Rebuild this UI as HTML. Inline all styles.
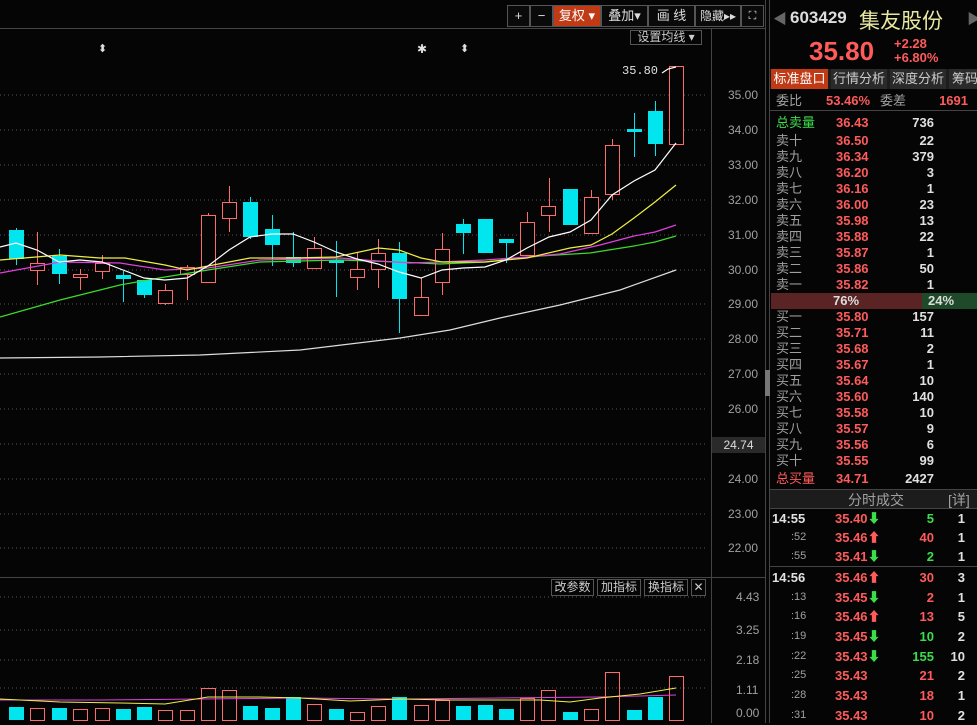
<!DOCTYPE html>
<html><head><meta charset="utf-8"><style>
*{margin:0;padding:0;box-sizing:border-box}
body{width:977px;height:723px;background:#050505;overflow:hidden;position:relative;font-family:"Liberation Sans","Noto Sans CJK SC",sans-serif}
.a{position:absolute;white-space:nowrap}
.btn{position:absolute;top:5px;height:22px;border:1px solid #555;color:#ddd;font-size:13px;line-height:20px;text-align:center;background:#0a0a0a}
.r{color:#ff5b5b}.g{color:#3ddc4b}.w{color:#e0e0e0}.gr{color:#a0a0a0}
.row{position:absolute;left:770px;width:207px;height:16px;font-size:13px;line-height:16px;font-weight:bold}
.row span{position:absolute}
.tr{position:absolute;left:770px;width:207px;height:19px;font-size:13px;line-height:19px;font-weight:bold}
.tr span{position:absolute}
</style></head><body>
<svg class="a" style="left:0;top:0" width="977" height="723">
<g stroke="#555" stroke-dasharray="1,3" stroke-width="1">
<line x1="0" y1="95" x2="705" y2="95"/><line x1="0" y1="130" x2="705" y2="130"/><line x1="0" y1="165" x2="705" y2="165"/><line x1="0" y1="200" x2="705" y2="200"/><line x1="0" y1="235" x2="705" y2="235"/><line x1="0" y1="270" x2="705" y2="270"/><line x1="0" y1="304" x2="705" y2="304"/><line x1="0" y1="339" x2="705" y2="339"/><line x1="0" y1="374" x2="705" y2="374"/><line x1="0" y1="409" x2="705" y2="409"/><line x1="0" y1="444" x2="705" y2="444"/><line x1="0" y1="479" x2="705" y2="479"/><line x1="0" y1="514" x2="705" y2="514"/><line x1="0" y1="548" x2="705" y2="548"/>
<line x1="0" y1="597" x2="705" y2="597"/><line x1="0" y1="630" x2="705" y2="630"/><line x1="0" y1="660" x2="705" y2="660"/><line x1="0" y1="688" x2="705" y2="688"/>
</g>
<g stroke="#444"><line x1="0" y1="28.5" x2="765" y2="28.5"/><line x1="711.5" y1="28" x2="711.5" y2="723"/><line x1="0" y1="577.5" x2="765" y2="577.5"/><line x1="765.5" y1="0" x2="765.5" y2="723"/><line x1="769.5" y1="0" x2="769.5" y2="723"/></g>
<rect x="765" y="370" width="5" height="26" fill="#777"/>
<g stroke-width="1">
<g stroke="#00e5ee">
<line x1="16.5" y1="228" x2="16.5" y2="265"/><line x1="59.5" y1="249" x2="59.5" y2="284"/><line x1="123.5" y1="271" x2="123.5" y2="302"/><line x1="144.5" y1="280" x2="144.5" y2="298"/><line x1="250.5" y1="197" x2="250.5" y2="239"/><line x1="272.5" y1="215" x2="272.5" y2="266"/><line x1="293.5" y1="232" x2="293.5" y2="267"/><line x1="336.5" y1="241" x2="336.5" y2="297"/><line x1="399.5" y1="242" x2="399.5" y2="333"/><line x1="463.5" y1="219" x2="463.5" y2="254"/><line x1="506.5" y1="240" x2="506.5" y2="263"/><line x1="634.5" y1="113" x2="634.5" y2="157"/><line x1="655.5" y1="101" x2="655.5" y2="156"/>
</g>
<g stroke="#ff6a6a">
<line x1="37.5" y1="232" x2="37.5" y2="285"/><line x1="80.5" y1="269" x2="80.5" y2="290"/><line x1="102.5" y1="255" x2="102.5" y2="279"/><line x1="165.5" y1="284" x2="165.5" y2="305"/><line x1="187.5" y1="265" x2="187.5" y2="300"/><line x1="208.5" y1="213" x2="208.5" y2="282"/><line x1="229.5" y1="186" x2="229.5" y2="232"/><line x1="314.5" y1="237" x2="314.5" y2="268"/><line x1="357.5" y1="252" x2="357.5" y2="290"/><line x1="378.5" y1="239" x2="378.5" y2="288"/><line x1="421.5" y1="278" x2="421.5" y2="315"/><line x1="442.5" y1="233" x2="442.5" y2="295"/><line x1="527.5" y1="212" x2="527.5" y2="255"/><line x1="549.5" y1="178" x2="549.5" y2="232"/><line x1="591.5" y1="190" x2="591.5" y2="233"/><line x1="612.5" y1="139" x2="612.5" y2="200"/>
</g></g>
<g fill="#00e5ee">
<rect x="9" y="230" width="15" height="29"/><rect x="52" y="256" width="15" height="18"/><rect x="116" y="275" width="15" height="4"/><rect x="137" y="280" width="15" height="15"/><rect x="243" y="202" width="15" height="35"/><rect x="265" y="229" width="15" height="16"/><rect x="286" y="257" width="15" height="6"/><rect x="329" y="260" width="15" height="3"/><rect x="392" y="253" width="15" height="46"/><rect x="456" y="224" width="15" height="9"/><rect x="478" y="219" width="15" height="34"/><rect x="499" y="239" width="15" height="4"/><rect x="563" y="189" width="15" height="36"/><rect x="627" y="129" width="15" height="3"/><rect x="648" y="111" width="15" height="33"/>
</g>
<g fill="#050505" stroke="#ff6a6a">
<rect x="30.5" y="263.5" width="14" height="7"/><rect x="73.5" y="274.5" width="14" height="3"/><rect x="95.5" y="263.5" width="14" height="8"/><rect x="158.5" y="290.5" width="14" height="13"/><rect x="180.5" y="267.5" width="14" height="7"/><rect x="201.5" y="215.5" width="14" height="67"/><rect x="222.5" y="202.5" width="14" height="16"/><rect x="307.5" y="248.5" width="14" height="20"/><rect x="350.5" y="269.5" width="14" height="8"/><rect x="371.5" y="253.5" width="14" height="16"/><rect x="414.5" y="297.5" width="14" height="18"/><rect x="435.5" y="249.5" width="14" height="33"/><rect x="520.5" y="222.5" width="14" height="33"/><rect x="541.5" y="206.5" width="14" height="9"/><rect x="584.5" y="197.5" width="14" height="36"/><rect x="605.5" y="145.5" width="14" height="49"/><rect x="669.5" y="66.5" width="14" height="78"/>
</g>
<g fill="none" stroke-width="1.2">
<polyline stroke="#ddd" points="0,358 100,357 200,355 300,350 400,338 450,330 500,318 560,305 620,290 676,270"/>
<polyline stroke="#3ddc2b" points="0,317 60,300 120,285 165,277 208,270 260,262 340,260 400,262 440,264 485,262 540,256 590,253 634,246 655,242 676,236"/>
<polyline stroke="#e040e0" points="0,273 60,262 120,263 165,270 208,268 260,260 340,258 378,261 410,263 440,262 485,260 527,257 560,254 600,245 634,236 655,232 676,225"/>
<polyline stroke="#f0f040" points="0,260 60,255 100,258 125,258 165,265 187,270 250,258 293,258 336,257 378,248 399,250 421,258 442,262 485,262 527,258 570,248 591,245 612,234 634,218 655,202 676,185"/>
<polyline stroke="#fff" points="0,247 16,243 37,250 59,262 80,260 102,262 123,270 144,278 165,280 187,278 208,266 229,250 250,237 272,234 293,234 314,242 336,252 357,259 378,264 399,272 421,278 442,270 463,268 485,267 506,260 527,248 549,237 570,232 591,220 612,195 634,181 655,170 676,143"/>
<polyline stroke="#fff" points="662,73 668,69 676,67"/>
</g>
<g fill="#00e5ee">
<rect x="9" y="707" width="15" height="13"/><rect x="52" y="708" width="15" height="12"/><rect x="116" y="709" width="15" height="11"/><rect x="137" y="707" width="15" height="13"/><rect x="243" y="706" width="15" height="14"/><rect x="265" y="708" width="15" height="12"/><rect x="286" y="697" width="15" height="23"/><rect x="329" y="709" width="15" height="11"/><rect x="392" y="697" width="15" height="23"/><rect x="456" y="706" width="15" height="14"/><rect x="478" y="705" width="15" height="15"/><rect x="499" y="709" width="15" height="11"/><rect x="563" y="712" width="15" height="8"/><rect x="627" y="710" width="15" height="10"/><rect x="648" y="697" width="15" height="23"/>
</g>
<g fill="none" stroke="#ff6a6a">
<rect x="30.5" y="708.5" width="14" height="12"/><rect x="73.5" y="709.5" width="14" height="11"/><rect x="95.5" y="708.5" width="14" height="12"/><rect x="158.5" y="710.5" width="14" height="10"/><rect x="180.5" y="710.5" width="14" height="10"/><rect x="201.5" y="688.5" width="14" height="32"/><rect x="222.5" y="690.5" width="14" height="30"/><rect x="307.5" y="704.5" width="14" height="16"/><rect x="350.5" y="712.5" width="14" height="8"/><rect x="371.5" y="706.5" width="14" height="14"/><rect x="414.5" y="705.5" width="14" height="15"/><rect x="435.5" y="700.5" width="14" height="20"/><rect x="520.5" y="698.5" width="14" height="22"/><rect x="541.5" y="690.5" width="14" height="30"/><rect x="584.5" y="709.5" width="14" height="11"/><rect x="605.5" y="672.5" width="14" height="48"/><rect x="669.5" y="676.5" width="14" height="44"/>
</g>
<polyline fill="none" stroke="#e040e0" points="0,700 100,700 200,699 300,698 400,699 500,698 600,697 676,695"/>
<polyline fill="none" stroke="#f0f040" points="0,699 60,702 120,703 165,704 208,697 260,697 300,698 350,701 400,699 450,700 500,700 540,700 570,702 600,698 640,694 676,688"/>
</svg>
<div class="btn" style="left:507px;width:23px">+</div>
<div class="btn" style="left:530px;width:23px">−</div>
<div class="btn" style="left:553px;width:48px;background:#c03a16;color:#fff">复权 ▾</div>
<div class="btn" style="left:601px;width:47px">叠加▾</div>
<div class="btn" style="left:648px;width:47px">画 线</div>
<div class="btn" style="left:695px;width:46px;font-size:12px">隐藏▸▸</div>
<div class="btn" style="left:741px;width:23px;font-size:11px">⛶</div>
<div class="a" style="left:630px;top:30px;width:72px;height:15px;border:1px solid #555;color:#ccc;font-size:12px;line-height:13px;text-align:center">设置均线 ▾</div>
<div class="a w" style="left:98px;top:42px;font-size:11px">⬍</div>
<div class="a w" style="left:417px;top:42px;font-size:12px">✱</div>
<div class="a w" style="left:460px;top:42px;font-size:11px">⬍</div>
<div class="a w" style="left:622px;top:64px;font-size:12px;font-family:'Liberation Mono',monospace">35.80</div>
<div class="a gr" style="left:728px;top:88px;font-size:12px">35.00</div>
<div class="a gr" style="left:728px;top:123px;font-size:12px">34.00</div>
<div class="a gr" style="left:728px;top:158px;font-size:12px">33.00</div>
<div class="a gr" style="left:728px;top:193px;font-size:12px">32.00</div>
<div class="a gr" style="left:728px;top:228px;font-size:12px">31.00</div>
<div class="a gr" style="left:728px;top:263px;font-size:12px">30.00</div>
<div class="a gr" style="left:728px;top:297px;font-size:12px">29.00</div>
<div class="a gr" style="left:728px;top:332px;font-size:12px">28.00</div>
<div class="a gr" style="left:728px;top:367px;font-size:12px">27.00</div>
<div class="a gr" style="left:728px;top:402px;font-size:12px">26.00</div>
<div class="a" style="left:712px;top:437px;width:53px;height:16px;background:#2a2a2a;color:#ddd;font-size:12px;line-height:16px;text-align:center">24.74</div>
<div class="a gr" style="left:728px;top:472px;font-size:12px">24.00</div>
<div class="a gr" style="left:728px;top:507px;font-size:12px">23.00</div>
<div class="a gr" style="left:728px;top:541px;font-size:12px">22.00</div>
<div class="a gr" style="left:736px;top:590px;font-size:12px">4.43</div>
<div class="a gr" style="left:736px;top:623px;font-size:12px">3.25</div>
<div class="a gr" style="left:736px;top:653px;font-size:12px">2.18</div>
<div class="a gr" style="left:736px;top:683px;font-size:12px">1.11</div>
<div class="a gr" style="left:736px;top:706px;font-size:12px">0.00</div>
<div class="a" style="left:551px;top:579px;width:43px;height:17px;border:1px solid #555;color:#ccc;font-size:12px;line-height:15px;text-align:center">改参数</div>
<div class="a" style="left:597px;top:579px;width:44px;height:17px;border:1px solid #555;color:#ccc;font-size:12px;line-height:15px;text-align:center">加指标</div>
<div class="a" style="left:644px;top:579px;width:44px;height:17px;border:1px solid #555;color:#ccc;font-size:12px;line-height:15px;text-align:center">换指标</div>
<div class="a" style="left:691px;top:579px;width:15px;height:17px;border:1px solid #555;color:#ccc;font-size:12px;line-height:15px;text-align:center">✕</div>
<div class="a" style="left:773px;top:9px;color:#666;font-size:14px">◀</div>
<div class="a" style="left:790px;top:8px;color:#ddd;font-size:17px;font-weight:bold">603429</div>
<div class="a" style="left:859px;top:5px;color:#e8e8a0;font-size:21px">集友股份</div>
<div class="a" style="left:967px;top:9px;color:#666;font-size:14px">▶</div>
<div class="a r" style="left:809px;top:36px;font-size:26px;font-weight:bold">35.80</div>
<div class="a r" style="left:894px;top:37px;font-size:13px;font-weight:bold;line-height:14px">+2.28<br>+6.80%</div>
<div class="a" style="left:770px;top:69px;width:207px;height:20px;background:#1d1d1d"></div>
<div class="a" style="left:771px;top:69px;width:57px;height:20px;background:#c03a16;color:#fff;font-size:13px;line-height:20px;text-align:center">标准盘口</div>
<div class="a" style="left:831px;top:69px;width:56px;height:20px;background:#2a2a2a;color:#ccc;font-size:13px;line-height:20px;text-align:center">行情分析</div>
<div class="a" style="left:890px;top:69px;width:56px;height:20px;background:#2a2a2a;color:#ccc;font-size:13px;line-height:20px;text-align:center">深度分析</div>
<div class="a" style="left:949px;top:69px;width:28px;height:20px;background:#2a2a2a;color:#ccc;font-size:13px;line-height:20px;overflow:hidden;padding-left:3px">筹码</div>
<div class="a" style="left:770px;top:110px;width:207px;height:1px;background:#444"></div>
<div class="row" style="top:93px"><span class="gr" style="left:6px;font-weight:normal">委比</span><span class="r" style="left:56px">53.46%</span><span class="gr" style="left:110px;font-weight:normal">委差</span><span class="r" style="right:9px">1691</span></div>
<div class="row" style="top:115px"><span class="g" style="left:6px;font-weight:normal">总卖量</span><span class="r" style="left:66px">36.43</span><span class="w" style="right:43px">736</span></div>
<div class="row" style="top:133px"><span class="gr" style="left:6px;font-weight:normal">卖十</span><span class="r" style="left:66px">36.50</span><span class="w" style="right:43px">22</span></div>
<div class="row" style="top:149px"><span class="gr" style="left:6px;font-weight:normal">卖九</span><span class="r" style="left:66px">36.34</span><span class="w" style="right:43px">379</span></div>
<div class="row" style="top:165px"><span class="gr" style="left:6px;font-weight:normal">卖八</span><span class="r" style="left:66px">36.20</span><span class="w" style="right:43px">3</span></div>
<div class="row" style="top:181px"><span class="gr" style="left:6px;font-weight:normal">卖七</span><span class="r" style="left:66px">36.16</span><span class="w" style="right:43px">1</span></div>
<div class="row" style="top:197px"><span class="gr" style="left:6px;font-weight:normal">卖六</span><span class="r" style="left:66px">36.00</span><span class="w" style="right:43px">23</span></div>
<div class="row" style="top:213px"><span class="gr" style="left:6px;font-weight:normal">卖五</span><span class="r" style="left:66px">35.98</span><span class="w" style="right:43px">13</span></div>
<div class="row" style="top:229px"><span class="gr" style="left:6px;font-weight:normal">卖四</span><span class="r" style="left:66px">35.88</span><span class="w" style="right:43px">22</span></div>
<div class="row" style="top:245px"><span class="gr" style="left:6px;font-weight:normal">卖三</span><span class="r" style="left:66px">35.87</span><span class="w" style="right:43px">1</span></div>
<div class="row" style="top:261px"><span class="gr" style="left:6px;font-weight:normal">卖二</span><span class="r" style="left:66px">35.86</span><span class="w" style="right:43px">50</span></div>
<div class="row" style="top:277px"><span class="gr" style="left:6px;font-weight:normal">卖一</span><span class="r" style="left:66px">35.82</span><span class="w" style="right:43px">1</span></div>
<div class="a" style="left:771px;top:293px;width:151px;height:16px;background:#5a2424;color:#ddd;font-size:13px;font-weight:bold;line-height:16px;padding-left:62px">76%</div>
<div class="a" style="left:922px;top:293px;width:55px;height:16px;background:#1f4a2a;color:#ddd;font-size:13px;font-weight:bold;line-height:16px;padding-left:6px">24%</div>
<div class="row" style="top:309px"><span class="gr" style="left:6px;font-weight:normal">买一</span><span class="r" style="left:66px">35.80</span><span class="w" style="right:43px">157</span></div>
<div class="row" style="top:325px"><span class="gr" style="left:6px;font-weight:normal">买二</span><span class="r" style="left:66px">35.71</span><span class="w" style="right:43px">11</span></div>
<div class="row" style="top:341px"><span class="gr" style="left:6px;font-weight:normal">买三</span><span class="r" style="left:66px">35.68</span><span class="w" style="right:43px">2</span></div>
<div class="row" style="top:357px"><span class="gr" style="left:6px;font-weight:normal">买四</span><span class="r" style="left:66px">35.67</span><span class="w" style="right:43px">1</span></div>
<div class="row" style="top:373px"><span class="gr" style="left:6px;font-weight:normal">买五</span><span class="r" style="left:66px">35.64</span><span class="w" style="right:43px">10</span></div>
<div class="row" style="top:389px"><span class="gr" style="left:6px;font-weight:normal">买六</span><span class="r" style="left:66px">35.60</span><span class="w" style="right:43px">140</span></div>
<div class="row" style="top:405px"><span class="gr" style="left:6px;font-weight:normal">买七</span><span class="r" style="left:66px">35.58</span><span class="w" style="right:43px">10</span></div>
<div class="row" style="top:421px"><span class="gr" style="left:6px;font-weight:normal">买八</span><span class="r" style="left:66px">35.57</span><span class="w" style="right:43px">9</span></div>
<div class="row" style="top:437px"><span class="gr" style="left:6px;font-weight:normal">买九</span><span class="r" style="left:66px">35.56</span><span class="w" style="right:43px">6</span></div>
<div class="row" style="top:453px"><span class="gr" style="left:6px;font-weight:normal">买十</span><span class="r" style="left:66px">35.55</span><span class="w" style="right:43px">99</span></div>
<div class="row" style="top:471px"><span class="r" style="left:6px;font-weight:normal">总买量</span><span class="r" style="left:66px">34.71</span><span class="w" style="right:43px">2427</span></div>
<div class="a" style="left:770px;top:489px;width:207px;height:20px;background:#1c1c1c;border-top:1px solid #444;border-bottom:1px solid #444"></div>
<div class="a gr" style="left:848px;top:490px;font-size:14px">分时成交</div>
<div class="a gr" style="left:948px;top:490px;font-size:14px">[详]</div>
<div class="tr" style="top:509px"><span class="w" style="left:2px">14:55</span><span class="r" style="left:65px">35.40<b class="g">⬇</b></span><span class="g" style="right:43px">5</span><span class="w" style="right:12px">1</span></div>
<div class="tr" style="top:528px"><span class="gr" style="left:21px;font-weight:normal;font-size:11px">:52</span><span class="r" style="left:65px">35.46<b>⬆</b></span><span class="r" style="right:43px">40</span><span class="w" style="right:12px">1</span></div>
<div class="tr" style="top:547px"><span class="gr" style="left:21px;font-weight:normal;font-size:11px">:55</span><span class="r" style="left:65px">35.41<b class="g">⬇</b></span><span class="g" style="right:43px">2</span><span class="w" style="right:12px">1</span></div>
<div class="a" style="left:770px;top:566px;width:207px;height:1px;background:#444"></div>
<div class="tr" style="top:568px"><span class="w" style="left:2px">14:56</span><span class="r" style="left:65px">35.46<b>⬆</b></span><span class="r" style="right:43px">30</span><span class="w" style="right:12px">3</span></div>
<div class="tr" style="top:588px"><span class="gr" style="left:21px;font-weight:normal;font-size:11px">:13</span><span class="r" style="left:65px">35.45<b class="g">⬇</b></span><span class="r" style="right:43px">2</span><span class="w" style="right:12px">1</span></div>
<div class="tr" style="top:607px"><span class="gr" style="left:21px;font-weight:normal;font-size:11px">:16</span><span class="r" style="left:65px">35.46<b>⬆</b></span><span class="r" style="right:43px">13</span><span class="w" style="right:12px">5</span></div>
<div class="tr" style="top:627px"><span class="gr" style="left:21px;font-weight:normal;font-size:11px">:19</span><span class="r" style="left:65px">35.45<b class="g">⬇</b></span><span class="g" style="right:43px">10</span><span class="w" style="right:12px">2</span></div>
<div class="tr" style="top:647px"><span class="gr" style="left:21px;font-weight:normal;font-size:11px">:22</span><span class="r" style="left:65px">35.43<b class="g">⬇</b></span><span class="g" style="right:43px">155</span><span class="w" style="right:12px">10</span></div>
<div class="tr" style="top:666px"><span class="gr" style="left:21px;font-weight:normal;font-size:11px">:25</span><span class="r" style="left:65px">35.43</span><span class="r" style="right:43px">21</span><span class="w" style="right:12px">2</span></div>
<div class="tr" style="top:686px"><span class="gr" style="left:21px;font-weight:normal;font-size:11px">:28</span><span class="r" style="left:65px">35.43</span><span class="r" style="right:43px">18</span><span class="w" style="right:12px">1</span></div>
<div class="tr" style="top:706px"><span class="gr" style="left:21px;font-weight:normal;font-size:11px">:31</span><span class="r" style="left:65px">35.43</span><span class="r" style="right:43px">10</span><span class="w" style="right:12px">2</span></div>
</body></html>
